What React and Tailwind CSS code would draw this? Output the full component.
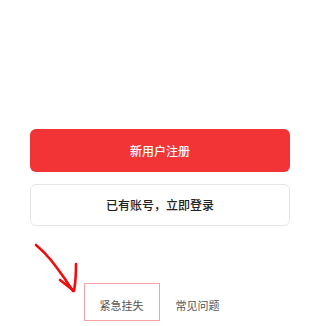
export default function App() {
    return (
        <div className="relative w-[320px] h-[326px] bg-white overflow-hidden" style={{ fontFamily: '"Noto Sans CJK SC", "Noto Sans", sans-serif' }}>
            <div className="px-[30px] pt-[129px] flex flex-col">
                <button className="h-[43px] w-full rounded-[6px] bg-[#f33437] text-white text-[12px] font-medium">
                    新用户注册
                </button>
                <button className="mt-[12px] h-[42px] w-full rounded-[6px] border border-[#e6e6e6] bg-white text-[#222] text-[12px] font-medium">
                    已有账号，立即登录
                </button>
                <div className="mt-[57px] flex justify-center pr-[1px]">
                    <div className="w-[76px] h-[38px] border border-[#f6a3a3] flex items-center justify-center pt-[6px] text-[11px] text-[#555]">
                        紧急挂失
                    </div>
                    <div className="w-[76px] h-[38px] flex items-center justify-center pt-[6px] text-[11px] text-[#555]">
                        常见问题
                    </div>
                </div>
            </div>

            {/* hand-drawn arrow */}
            <svg className="absolute left-0 top-0" width="320" height="326" viewBox="0 0 320 326" fill="none">
                <path d="M36 245 C42 250 46 254 50 259 C55 265 60 272 65 279 C68 284 71 288 73 291" stroke="#f20c0c" strokeWidth="2.6" strokeLinecap="round" strokeLinejoin="round" />
                <path d="M76 264 C76 272 75.5 283 74 291 L60 280" stroke="#f20c0c" strokeWidth="2.6" strokeLinecap="round" strokeLinejoin="round" />
            </svg>
        </div>
    )
}
